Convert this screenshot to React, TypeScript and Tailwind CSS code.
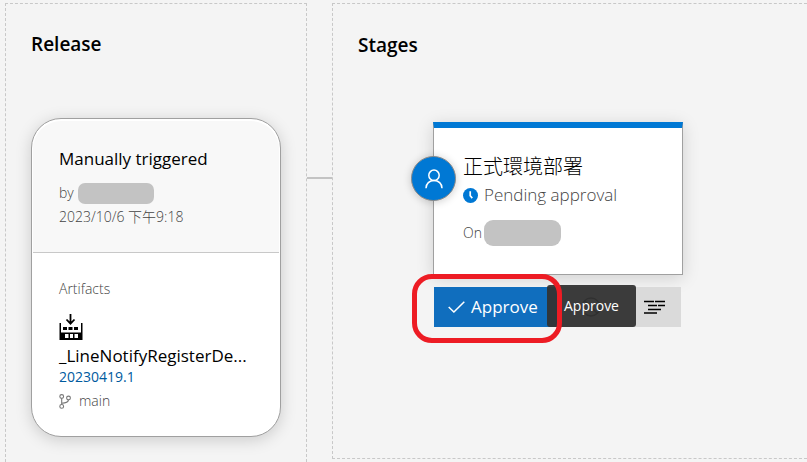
import type { ReactNode } from "react";

/* ─────────────────────────────  ICONS  ───────────────────────────── */

function BuildIcon() {
  return (
    <svg viewBox="0 0 24 26" className="h-[26px] w-6" aria-hidden="true">
      <path d="M11.5 0v10M7.5 5.5l4 4.2 4-4.2" fill="none" stroke="#000" strokeWidth="1.8" />
      <path
        fillRule="evenodd"
        d="M.5 9H2v9.5h20V9h1.5v17H.5zM6 20v4h3.500v-4zM11 20v4h3v-4zM15.500 20v4H19v-4z"
      />
      <path d="M4 13h4v3H4zM9.5 13h4v3h-4zM15 13h4v3h-4z" />
    </svg>
  );
}

function BranchIcon() {
  return (
    <svg
      viewBox="0 0 12 15"
      className="h-[15px] w-3"
      fill="none"
      stroke="#777"
      strokeWidth="1.1"
      aria-hidden="true"
    >
      <circle cx="2.7" cy="2.5" r="1.9" />
      <circle cx="2.7" cy="12.4" r="1.9" />
      <circle cx="9.5" cy="4" r="1.9" />
      <path d="M2.7 4.4v6.1M9.4 5.9C9.2 8.6 7 9.2 2.8 9.2" />
    </svg>
  );
}

function PersonIcon() {
  return (
    <svg
      viewBox="0 0 18 20"
      className="h-5 w-[18px]"
      fill="none"
      stroke="#fff"
      strokeWidth="1.5"
      aria-hidden="true"
    >
      <circle cx="9" cy="6.3" r="5.2" />
      <path d="M1 19.2c0-4.5 3.5-7.7 8-7.7s8 3.2 8 7.7" />
    </svg>
  );
}

function ClockIcon() {
  return (
    <svg viewBox="0 0 16 16" className="h-[15px] w-[15px] shrink-0" aria-hidden="true">
      <circle cx="8" cy="8" r="8" fill="#0078d4" />
      <path d="M7.7 3.5v4.7l2.2 2.6" fill="none" stroke="#fff" strokeWidth="1.8" />
    </svg>
  );
}

function CheckIcon() {
  return (
    <svg viewBox="0 0 17 12" className="h-3 w-[17px]" aria-hidden="true">
      <path d="M.7 6l5.200 5L16.300.8" fill="none" stroke="#fff" strokeWidth="1.5" />
    </svg>
  );
}

function RejectIcon() {
  return (
    <svg
      viewBox="0 0 20 20"
      className="h-5 w-5"
      fill="none"
      stroke="#000"
      strokeWidth="1.4"
      aria-hidden="true"
    >
      <circle cx="10" cy="10" r="9" />
      <path d="M3.6 3.6l12.8 12.8" />
    </svg>
  );
}

function LogsIcon() {
  return (
    <svg
      viewBox="0 0 22 14"
      className="h-3.5 w-[22px]"
      fill="none"
      stroke="#000"
      strokeWidth="1.4"
      aria-hidden="true"
    >
      <path d="M0 1.500h10M11 1.500h10M4 5.500h9M14 5.500h7M4 9.500h13M0 13h13" />
    </svg>
  );
}

/* ─────────────────────────────  PIECES  ───────────────────────────── */

function Heading({ children }: { children: ReactNode }) {
  return <h2 className="text-[19px] leading-7 font-semibold text-black">{children}</h2>;
}

function ReleaseCard() {
  return (
    <div className="mt-[60px] rounded-[30px] border border-[#a0a0a0] bg-white px-px pt-0.5 shadow-[0_3px_16px_rgba(0,0,0,0.17)]">
      <div className="h-[132px] rounded-t-[28px] border-b border-[#c8c8c8] bg-[#f8f8f8] px-[26px] pt-[26px]">
        <h3 className="text-[17px] leading-6 text-black">Manually triggered</h3>
        <div className="mt-2.5 flex items-center gap-1 text-sm leading-6 font-light text-[#444]">
          by
          <span className="h-[21px] w-[76px] rounded-[7px] bg-[#c3c3c3]" />
        </div>
        <p className="text-sm leading-6 font-light text-[#444]">2023/10/6 下午9:18</p>
      </div>
      <div className="px-[26px] pt-6 pb-[23px]">
        <p className="text-sm leading-6 font-light text-[#444]">Artifacts</p>
        <div className="mt-[13px]">
          <BuildIcon />
        </div>
        <p className="mt-1 text-[17px] leading-6 text-black">_LineNotifyRegisterDe...</p>
        <a href="#build" className="block text-sm leading-[18px] text-[#005a9e]">
          20230419.1
        </a>
        <div className="mt-[3px] flex items-center gap-2 text-sm leading-6 font-light text-[#444]">
          <BranchIcon />
          main
        </div>
      </div>
    </div>
  );
}

function StageCard() {
  return (
    <div className="relative w-[250px] border border-t-[6px] border-[#a0a0a0] border-t-[#0078d4] bg-white pt-[27px] pr-4 pb-[27px] pl-[29px] shadow-[0_3px_16px_rgba(0,0,0,0.15)]">
      <span className="absolute top-7 -left-[23px] flex h-[45px] w-[45px] items-center justify-center rounded-full border border-[#8a8a8a] bg-[#0078d4] shadow-[0_1px_8px_rgba(0,0,0,0.2)]">
        <PersonIcon />
      </span>
      <h3 className="text-xl leading-6 font-light text-black">正式環境部署</h3>
      <div className="mt-1 flex items-center gap-1.5 text-[17px] leading-6 font-light text-[#444]">
        <ClockIcon />
        Pending approval
      </div>
      <div className="mt-3 flex items-center gap-0.5 text-sm leading-7 font-light text-[#444]">
        On
        <span className="h-[26px] w-[77px] rounded-[9px] bg-[#c3c3c3]" />
      </div>
    </div>
  );
}

function StageActions() {
  return (
    <div className="relative mt-3 ml-px flex h-10 w-[247px] bg-[#dadada]">
      <button className="flex w-[123px] items-center gap-1.5 bg-[#106ebe] pl-3.5 text-[17px] text-white">
        <CheckIcon />
        Approve
      </button>
      <button aria-label="Reject" className="flex flex-1 items-center pl-6">
        <RejectIcon />
      </button>
      <button aria-label="View logs" className="flex w-[45px] items-center pl-2">
        <LogsIcon />
      </button>
      <span
        role="tooltip"
        className="absolute -top-0.5 left-[113px] flex h-[42px] w-[89px] items-center justify-center rounded-[3px] bg-[#333]/95 text-sm text-white"
      >
        Approve
      </span>
      {/* red marker round the approve button */}
      <span className="pointer-events-none absolute -top-[13px] -left-[22px] h-[69px] w-[150px] rounded-[20px] border-[5px] border-[#ed1c24]" />
    </div>
  );
}

export default function App() {
  return (
    <main className="flex min-h-screen overflow-hidden bg-[#f4f4f4] pt-[3px] pl-[5px] font-['Open_Sans','Noto_Sans_CJK_TC',sans-serif]">
      <section className="w-[302px] shrink-0 border border-b-0 border-dashed border-[#c8c8c8] px-[25px] pt-[26px]">
        <Heading>Release</Heading>
        <ReleaseCard />
      </section>
      <div className="mt-[174px] h-0.5 w-[25px] shrink-0 bg-[#c3c3c3]" />
      <section className="mb-[3px] flex-1 border border-r-0 border-dashed border-[#c8c8c8] pt-[27px] pl-[25px]">
        <Heading>Stages</Heading>
        <div className="mt-[63px] ml-[75px]">
          <StageCard />
          <StageActions />
        </div>
      </section>
    </main>
  );
}
